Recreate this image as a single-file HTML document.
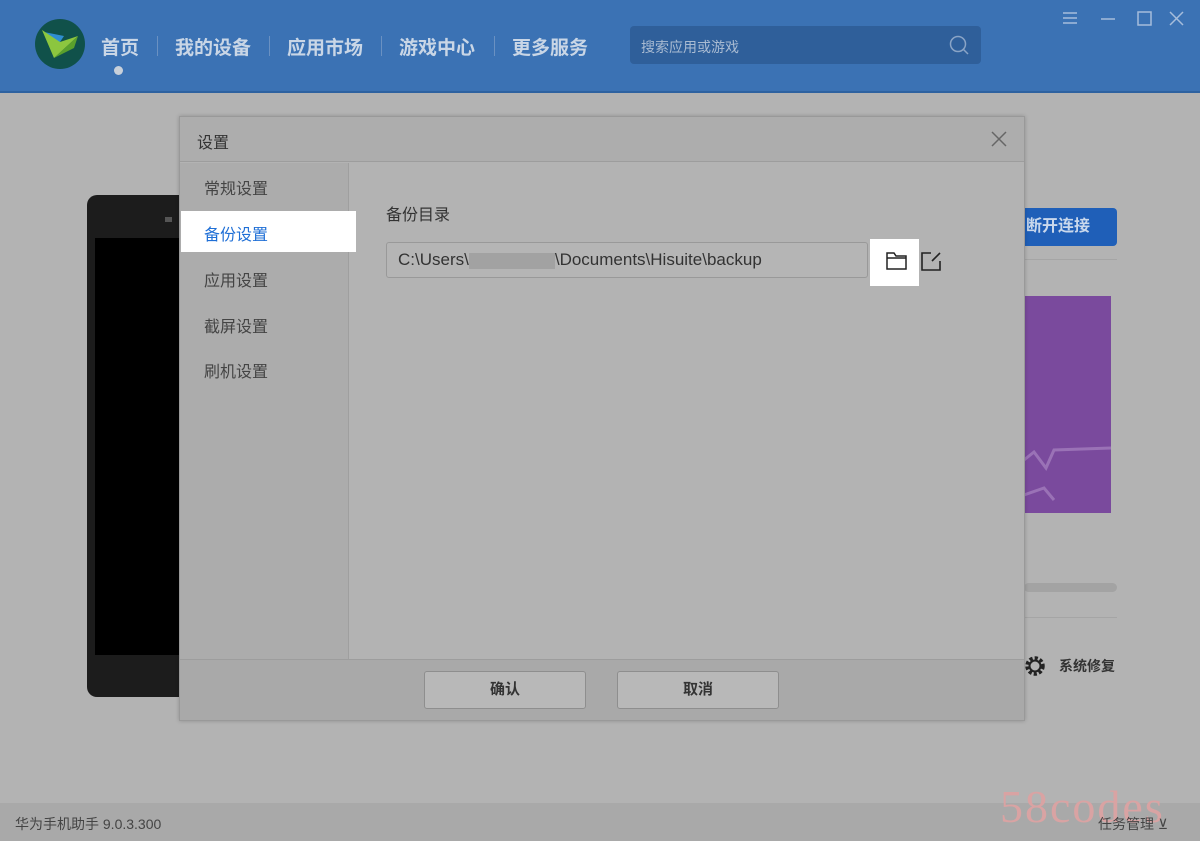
<!DOCTYPE html>
<html><head><meta charset="utf-8"><style>
*{margin:0;padding:0;box-sizing:border-box}
body{width:1200px;height:841px;background:#b3b3b3;font-family:"Liberation Sans","Noto Sans CJK SC",sans-serif;position:relative;overflow:hidden;color:#333}
.a{position:absolute}
#hdr{left:0;top:0;width:1200px;height:93px;background:#3b72b4;border-bottom:2px solid #2e62a0}
.nav{top:33px;font-size:19px;font-weight:bold;color:#c9d6e6}
.sep{top:36px;width:1px;height:20px;background:#6a91c2}
.side{left:204px;font-size:16px;color:#444}
.btn{top:671px;width:162px;height:38px;border:1px solid #8e8e8e;border-radius:3px;background:#b8b8b8;font-size:15px;font-weight:bold;text-align:center;line-height:36px;color:#333}
</style></head><body>
<div id="hdr" class="a">
<svg class="a" style="left:34px;top:18px" width="52" height="52" viewBox="0 0 52 52"><circle cx="26" cy="26" r="25" fill="#10514a"/><path d="M10 14 L30 18 L22 30 Z" fill="#2f8ed1"/><path d="M8 12 L20 40 L44 18 L26 24 Z" fill="#8cc63f"/><path d="M20 40 L44 18 L40 30 Z" fill="#5aa02c"/></svg>
<div class="a nav" style="left:101px">首页</div>
<div class="a" style="left:114px;top:66px;width:9px;height:9px;border-radius:50%;background:#c8d0da"></div>
<div class="a sep" style="left:157px"></div>
<div class="a nav" style="left:175px">我的设备</div>
<div class="a sep" style="left:269px"></div>
<div class="a nav" style="left:287px">应用市场</div>
<div class="a sep" style="left:381px"></div>
<div class="a nav" style="left:399px">游戏中心</div>
<div class="a sep" style="left:494px"></div>
<div class="a nav" style="left:512px">更多服务</div>
<div class="a" style="left:630px;top:26px;width:351px;height:38px;background:#2f5f9a;border-radius:4px"></div>
<div class="a" style="left:641px;top:37px;font-size:14px;color:#a9bbd2">搜索应用或游戏</div>
<svg class="a" style="left:948px;top:34px" width="22" height="22"><circle cx="10" cy="10" r="7.5" fill="none" stroke="#8aa4c6" stroke-width="1.5"/><path d="M15.5 15.5 L20 20" stroke="#8aa4c6" stroke-width="1.5"/></svg>
<svg class="a" style="left:1060px;top:10px" width="130" height="18" stroke="#a6bddb" stroke-width="1.5" fill="none"><path d="M3 3h14M3 8h14M3 13h14"/><path d="M41 9h14"/><rect x="78" y="2" width="13" height="13"/><path d="M110 2l13 13M123 2l-13 13"/></svg>
</div>
<div class="a" style="left:87px;top:195px;width:110px;height:502px;background:#1c1c1c;border-radius:10px"></div>
<div class="a" style="left:95px;top:238px;width:100px;height:417px;background:#000"></div>
<div class="a" style="left:165px;top:217px;width:7px;height:5px;background:#555"></div>
<div class="a" style="left:1010px;top:208px;width:107px;height:38px;background:#1f5fb8;border-radius:4px;color:#c9d8ec;font-size:16px;font-weight:bold;line-height:38px;padding-left:16px">断开连接</div>
<div class="a" style="left:1024px;top:259px;width:93px;height:1px;background:#a5a5a5"></div>
<div class="a" style="left:1024px;top:296px;width:87px;height:217px;background:#7a4a9d"></div>
<svg class="a" style="left:1024px;top:440px" width="87" height="73" fill="none" stroke="#9a72b6" stroke-width="3"><path d="M0 20 L10 12 L22 28 L30 10 L87 8"/><path d="M0 55 L20 48 L30 60"/></svg>
<div class="a" style="left:1024px;top:583px;width:93px;height:9px;background:#a3a3a3;border-radius:5px"></div>
<div class="a" style="left:1024px;top:617px;width:93px;height:1px;background:#a5a5a5"></div>
<svg class="a" style="left:1022px;top:653px" width="26" height="26"><circle cx="13" cy="13" r="8" fill="none" stroke="#222" stroke-width="3.5" stroke-dasharray="3.2 2.1"/><circle cx="13" cy="13" r="5.5" fill="none" stroke="#222" stroke-width="2"/></svg>
<div class="a" style="left:1059px;top:656px;font-size:14px;font-weight:bold;color:#333">系统修复</div>
<div class="a" style="left:0;top:803px;width:1200px;height:38px;background:#a9a9a9"></div>
<div class="a" style="left:15px;top:814px;font-size:14px;color:#444">华为手机助手 9.0.3.300</div>
<div class="a" style="left:1000px;top:780px;font-size:46px;letter-spacing:2px;color:#d9a3a3;font-family:'Liberation Serif',serif">58codes</div>
<div class="a" style="left:1098px;top:814px;font-size:14px;color:#444">任务管理 ⊻</div>
<div class="a" style="left:179px;top:116px;width:846px;height:605px;background:#b3b3b3;border:1px solid #999;box-shadow:0 0 4px rgba(0,0,0,.2)"></div>
<div class="a" style="left:180px;top:117px;width:844px;height:45px;background:#adadad;border-bottom:1px solid #9d9d9d"></div>
<div class="a" style="left:197px;top:129px;font-size:16px;color:#333">设置</div>
<svg class="a" style="left:990px;top:130px" width="18" height="18" stroke="#666" stroke-width="1.5"><path d="M2 2l14 14M16 2L2 16"/></svg>
<div class="a" style="left:180px;top:163px;width:169px;height:496px;background:#acacac;border-right:1px solid #9f9f9f"></div>
<div class="a side" style="top:175px">常规设置</div>
<div class="a" style="left:181px;top:211px;width:175px;height:41px;background:#fff"></div>
<div class="a side" style="top:221px;color:#1f6fd6">备份设置</div>
<div class="a side" style="top:267px">应用设置</div>
<div class="a side" style="top:313px">截屏设置</div>
<div class="a side" style="top:358px">刷机设置</div>
<div class="a" style="left:386px;top:201px;font-size:16px;color:#333">备份目录</div>
<div class="a" style="left:386px;top:242px;width:482px;height:36px;border:1px solid #999;border-radius:3px;background:#b5b5b5;font-size:17px;line-height:34px;padding-left:11px;color:#333">C:\Users\<span style="display:inline-block;width:86px;height:16px;background:#a2a2a2;vertical-align:middle"></span>\Documents\Hisuite\backup</div>
<div class="a" style="left:870px;top:239px;width:49px;height:47px;background:#fff"></div>
<svg class="a" style="left:885px;top:250px" width="24" height="22" fill="none" stroke="#222" stroke-width="1.5"><path d="M2 3h7l2 3h10v13H2z"/><path d="M2 8h19"/></svg>
<svg class="a" style="left:920px;top:250px" width="24" height="22" fill="none" stroke="#222" stroke-width="1.6"><path d="M11 3H2v17h18v-9"/><path d="M20 3l-8 8"/></svg>
<div class="a" style="left:180px;top:659px;width:844px;height:61px;background:#a9a9a9;border-top:1px solid #9d9d9d"></div>
<div class="a btn" style="left:424px">确认</div>
<div class="a btn" style="left:617px">取消</div>
</body></html>
